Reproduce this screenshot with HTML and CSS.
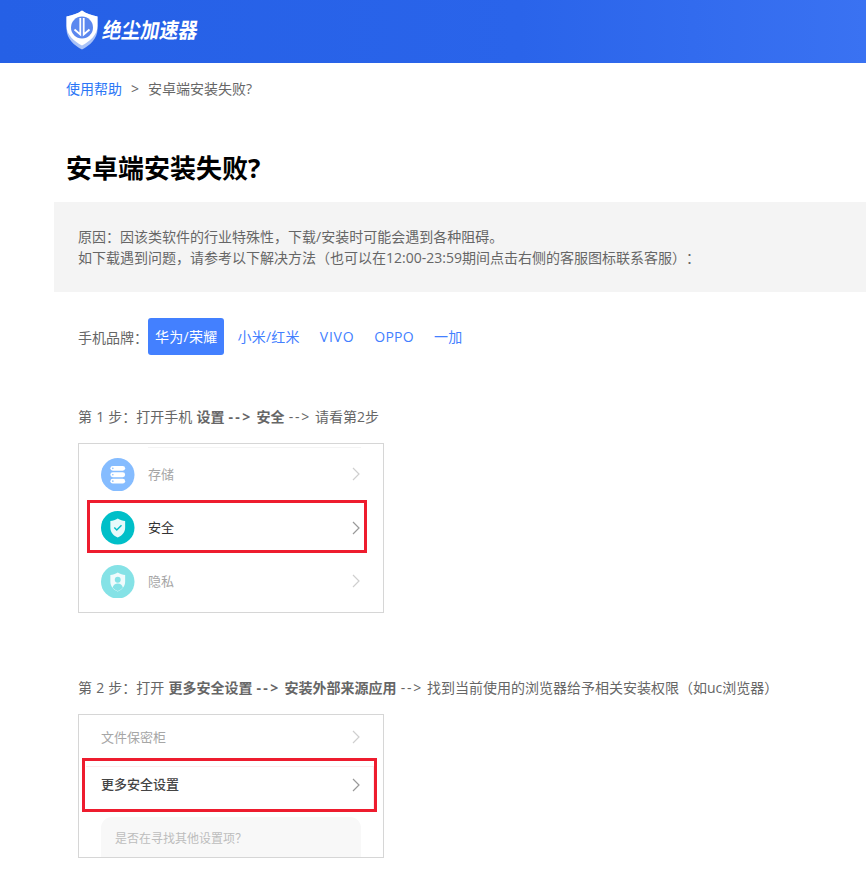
FILE: index.html
```html
<!DOCTYPE html>
<html lang="zh-CN">
<head>
<meta charset="utf-8">
<title>安卓端安装失败?</title>
<link rel="stylesheet" href="styles.css">
</head>
<body>
<header class="site-header">
  <a class="logo" href="#">
    <svg class="logo-mark" width="32" height="40" viewBox="0 0 32 40">
      <path d="M16 0.500C11.500 3.800 6 5.500 0.500 6.500V19C0.500 29 8.500 35.500 16 39.500C23.500 35.500 31.500 29 31.500 19V6.500C26 5.500 20.500 3.800 16 0.500Z" fill="#a9c2f7"/>
      <path d="M16 0.500C11.500 3.800 6 5.500 0.500 6.500V16C0.500 25 8.500 31.500 16 35.500C23.500 31.500 31.500 25 31.500 16V6.500C26 5.500 20.500 3.800 16 0.500Z" fill="#fff"/>
      <circle cx="16" cy="17.500" r="11" fill="#5c88ef"/>
      <path d="M14.300 8V24.500L8.500 19.500M17.700 8V24.500L23.500 19.500" fill="none" stroke="#fff" stroke-width="1.800"/>
    </svg>
    <span class="logo-text">绝尘加速器</span>
  </a>
</header>
<nav class="crumbs">
  <a class="crumb-link" href="#">使用帮助</a>
  <span class="crumb-sep">&gt;</span>
  <span>安卓端安装失败?</span>
</nav>
<h1 class="title">安卓端安装失败?</h1>
<section class="notice">
  <p>原因<span class="colon">：</span>因该类软件的行业特殊性，下载/安装时可能会遇到各种阻碍。</p>
  <p>如下载遇到问题，请参考以下解决方法（也可以在12:00-23:59期间点击右侧的客服图标联系客服）<span class="colon">：</span></p>
</section>
<div class="brands">
  <span class="brands-label">手机品牌<span class="colon">：</span></span>
  <a class="brand active" href="#">华为/荣耀</a>
  <a class="brand" href="#">小米/红米</a>
  <a class="brand brand-wide" href="#">VIVO</a>
  <a class="brand" href="#">OPPO</a>
  <a class="brand" href="#">一加</a>
</div>

<p class="step step-one">第 1 步<span class="colon">：</span>打开手机 <b>设置 <span class="arrow-bold">--&gt;</span> 安全</b> <span class="arrow">--&gt;</span> 请看第2步</p>
<div class="shot shot-one">
  <div class="shot-rule"></div>
  <div class="row dim">
    <svg class="row-icon" viewBox="0 0 34 34">
      <circle cx="17" cy="17" r="17" fill="#85bcff"/>
      <rect x="9.500" y="8" width="15" height="5" rx="2.500" fill="#fff"/>
      <rect x="9.500" y="14.500" width="15" height="5" rx="2.500" fill="#fff"/>
      <rect x="9.500" y="21" width="15" height="5" rx="2.500" fill="#fff"/>
      <circle cx="12" cy="10.500" r=".8" fill="#85bcff"/>
      <circle cx="12" cy="17" r=".8" fill="#85bcff"/>
      <circle cx="12" cy="23.500" r=".8" fill="#85bcff"/>
    </svg>
    <span class="row-label">存储</span>
    <svg class="chev" viewBox="0 0 8 14"><path d="M1 1L7 7L1 13" fill="none" stroke="#cfcfcf" stroke-width="1.200"/></svg>
  </div>
  <div class="row">
    <svg class="row-icon" viewBox="0 0 34 34">
      <circle cx="17" cy="17" r="17" fill="#00bfc8"/>
      <path d="M17 7.500C14.500 9 12 9.800 9.500 10.200V17C9.500 22 13 25 17 27C21 25 24.500 22 24.500 17V10.200C22 9.800 19.500 9 17 7.500Z" fill="#e6fafa"/>
      <path d="M13.500 16.800L16 19.200L20.800 14.500" fill="none" stroke="#00bfc8" stroke-width="1.500"/>
    </svg>
    <span class="row-label strong">安全</span>
    <svg class="chev" viewBox="0 0 8 14"><path d="M1 1L7 7L1 13" fill="none" stroke="#999" stroke-width="1.200"/></svg>
  </div>
  <div class="row dim">
    <svg class="row-icon" viewBox="0 0 34 34">
      <circle cx="17" cy="17" r="17" fill="#85e2e6"/>
      <path d="M17 7.500C14.500 9 12 9.800 9.500 10.200V17C9.500 22 13 25 17 27C21 25 24.500 22 24.500 17V10.200C22 9.800 19.500 9 17 7.500Z" fill="#f0fbfc"/>
      <circle cx="17" cy="15" r="3" fill="#85e2e6"/>
      <path d="M11.800 23C12.500 19.800 14.500 18.800 17 18.800C19.500 18.800 21.500 19.800 22.200 23C20.500 24.600 19 25.500 17 26.300C15 25.500 13.500 24.600 11.800 23Z" fill="#85e2e6"/>
    </svg>
    <span class="row-label">隐私</span>
    <svg class="chev" viewBox="0 0 8 14"><path d="M1 1L7 7L1 13" fill="none" stroke="#cfcfcf" stroke-width="1.200"/></svg>
  </div>
  <div class="mark mark-one"></div>
</div>

<p class="step step-two">第 2 步<span class="colon">：</span>打开 <b>更多安全设置 <span class="arrow-bold">--&gt;</span> 安装外部来源应用</b> <span class="arrow">--&gt;</span> 找到当前使用的浏览器给予相关安装权限（如uc浏览器）</p>
<div class="shot shot-two">
  <div class="row-plain dim">
    <span class="row-label wide">文件保密柜</span>
    <svg class="chev" viewBox="0 0 8 14"><path d="M1 1L7 7L1 13" fill="none" stroke="#cfcfcf" stroke-width="1.200"/></svg>
  </div>
  <div class="row-plain">
    <span class="row-label wide bold">更多安全设置</span>
    <svg class="chev" viewBox="0 0 8 14"><path d="M1 1L7 7L1 13" fill="none" stroke="#999" stroke-width="1.200"/></svg>
  </div>
  <div class="hint"><span>是否在寻找其他设置项？</span></div>
  <div class="mark mark-two"></div>
</div>
</body>
</html>
```

FILE: styles.css
```css
* { box-sizing: border-box; }
html, body { margin: 0; padding: 0; }
body {
  width: 866px;
  height: 882px;
  overflow: hidden;
  background: #fff;
  color: #666;
  font-family: "Open Sans", "Noto Sans CJK SC", sans-serif;
  font-size: 14px;
  text-spacing-trim: space-all;
}
a { text-decoration: none; }
p { margin: 0; }
.colon { font-family: "Noto Sans CJK TC", sans-serif; }

.site-header {
  height: 63px;
  padding: 10px 0 0 66px;
  background: linear-gradient(90deg, #2560e6 0%, #2a64ea 60%, #3a72f2 100%);
}
.logo { display: flex; align-items: flex-start; gap: 5px; }
.logo-mark { display: block; flex: none; }
.logo-text {
  margin-top: 6px;
  color: #fff;
  font-size: 19px;
  line-height: 28px;
  font-weight: 700;
  transform: skewX(-10deg) scaleY(1.120);
  transform-origin: left center;
}

.crumbs {
  display: flex;
  gap: 9px;
  padding: 16px 0 0 66px;
  line-height: 20px;
}
.crumb-link { color: #2a76f6; }
.crumb-sep { color: #666; }

.title {
  margin: 49px 0 0 66px;
  color: #000;
  font-size: 26px;
  line-height: 40px;
  font-weight: 700;
}

.notice {
  margin: 14px 0 0 54px;
  padding: 24px 24px 24px;
  height: 90px;
  background: #f4f4f4;
  line-height: 21px;
  white-space: nowrap;
}

.brands {
  display: flex;
  align-items: center;
  margin: 26px 0 0 78px;
  height: 37px;
}
.brands-label { white-space: nowrap; }
.brand {
  padding: 0 7px;
  line-height: 37px;
  letter-spacing: .25px;
  color: #4380ff;
  border-radius: 3px;
  white-space: nowrap;
}
.brand + .brand { margin-left: 6px; }
.brand.brand-wide { letter-spacing: .75px; }
.brand.active { color: #fff; background: #4380ff; }

.step { margin-left: 78px; line-height: 20px; white-space: nowrap; word-spacing: .5px; }
.step b { font-weight: 700; }
.arrow { letter-spacing: 1.700px; }
.arrow-bold { letter-spacing: 2.300px; }
.step-one { margin-top: 51px; }
.step-two { margin-top: 64px; }

.shot {
  position: relative;
  width: 306px;
  margin: 16px 0 0 78px;
  border: 1px solid #d6d6d6;
}
.shot-one { height: 170px; padding: 2.500px 0 0 22px; }
.shot-two { height: 144px; }
.shot-rule { height: 1px; margin: 0 22px 0 47px; background: #f4f4f4; }

.row {
  display: flex;
  align-items: center;
  height: 53.500px;
  padding-right: 23px;
}
.row-icon { display: block; width: 33.500px; height: 33.500px; flex: none; }
.row-label { margin: 0 0 2px 13.500px; font-size: 13px; color: #333; }
.row.dim .row-label, .row-plain.dim .row-label { color: #a6a6a6; }
.chev { display: block; width: 8px; height: 14px; margin-left: auto; flex: none; }

.row-plain {
  display: flex;
  align-items: center;
  height: 44px;
  padding: 0 23px 0 22px;
}
.row-plain + .row-plain { height: 51px; }
.row-label.wide { margin-left: 0; }
.row-label.bold { font-weight: 500; color: #444; }

.hint {
  height: 40px;
  margin: 7px 22px 0;
  padding: 12px 14px 0;
  border-radius: 11px 11px 0 0;
  background: #f8f8f8;
  color: #bdbdbd;
  font-size: 12px;
  line-height: 20px;
}

.mark { position: absolute; border: 3px solid #ee1c2e; }
.mark-one { left: 8px; top: 56px; width: 280px; height: 53px; }
.mark-two { left: 3px; top: 43px; width: 295px; height: 54px; }
.mark-two::before {
  content: "";
  position: absolute;
  inset: 5px 0 0 1px;
  border-top: 1px solid #fdeaec;
  border-right: 1px solid #fdeaec;
}
```
